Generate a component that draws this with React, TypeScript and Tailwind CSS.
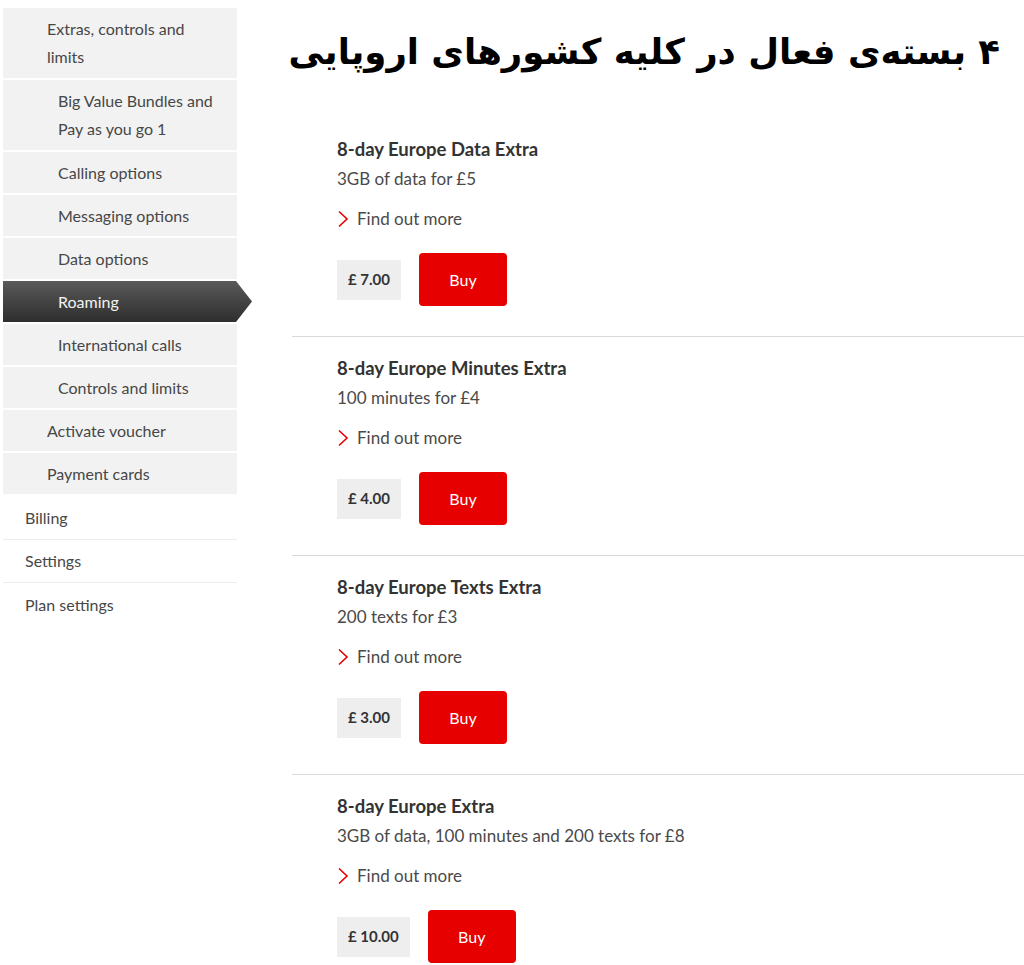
import React from "react";

type SideItem = { label: string; indent: string; lines?: number; active?: boolean };

const grayItems: SideItem[] = [
  { label: "Extras, controls and limits", indent: "pl-[44px] pr-[20px]", lines: 2 },
  { label: "Big Value Bundles and Pay as you go 1", indent: "pl-[55px] pr-[20px]", lines: 2 },
  { label: "Calling options", indent: "pl-[55px]" },
  { label: "Messaging options", indent: "pl-[55px]" },
  { label: "Data options", indent: "pl-[55px]" },
  { label: "Roaming", indent: "pl-[55px]", active: true },
  { label: "International calls", indent: "pl-[55px]" },
  { label: "Controls and limits", indent: "pl-[55px]" },
  { label: "Activate voucher", indent: "pl-[44px]" },
  { label: "Payment cards", indent: "pl-[44px]" },
];

const whiteItems = ["Billing", "Settings", "Plan settings"];

const cards = [
  { title: "8-day Europe Data Extra", sub: "3GB of data for £5", price: "£ 7.00" },
  { title: "8-day Europe Minutes Extra", sub: "100 minutes for £4", price: "£ 4.00" },
  { title: "8-day Europe Texts Extra", sub: "200 texts for £3", price: "£ 3.00" },
  { title: "8-day Europe Extra", sub: "3GB of data, 100 minutes and 200 texts for £8", price: "£ 10.00" },
];

function Chevron() {
  return (
    <svg width="12" height="18" viewBox="0 0 12 18" className="shrink-0">
      <polyline points="2,1.5 10,9 2,16.5" fill="none" stroke="#e60000" strokeWidth="1.6" />
    </svg>
  );
}

export default function App() {
  return (
    <div
      className="w-[1024px] h-[965px] bg-white overflow-hidden flex"
      style={{ fontFamily: "Lato, 'Open Sans', sans-serif" }}
    >
      {/* Sidebar */}
      <div className="w-[234px] ml-[3px] pt-[8px] shrink-0">
        <div className="flex flex-col gap-[2px]">
          {grayItems.map((it) =>
            it.active ? (
              <div
                key={it.label}
                className="w-[249px] h-[41px] flex items-center pl-[55px] text-[16px] text-[#f2f2f2] bg-gradient-to-b from-[#5a5a5a] to-[#2e2e2e] [clip-path:polygon(0_0,233px_0,249px_50%,233px_100%,0_100%)]"
              >
                {it.label}
              </div>
            ) : (
              <div
                key={it.label}
                className={`bg-[#f2f2f2] text-[#474747] text-[16px] ${it.indent} ${
                  it.lines === 2 ? "py-[7px] leading-[28px]" : "h-[41px] flex items-center"
                }`}
              >
                {it.label}
              </div>
            )
          )}
        </div>
        <div className="mt-[3px] flex flex-col">
          {whiteItems.map((l) => (
            <div
              key={l}
              className="h-[43px] flex items-center pl-[22px] text-[16px] text-[#474747] border-b border-[#ececec] last:border-b-0"
            >
              {l}
            </div>
          ))}
        </div>
      </div>

      {/* Main */}
      <div className="ml-[55px] flex-1 flex flex-col min-w-0">
        <div className="h-[118px] shrink-0 pt-[24px] pr-[24px]">
          <h1
            dir="rtl"
            className="text-right whitespace-nowrap text-[35.5px] leading-[56px] font-bold text-black"
            style={{ fontFamily: "'DejaVu Sans', sans-serif" }}
          >
            ۴ بسته‌ی فعال در کلیه کشورهای اروپایی
          </h1>
        </div>
        {cards.map((c, i) => (
          <div
            key={c.title}
            className={`shrink-0 pl-[45px] pt-[19px] pb-[30px] ${i < cards.length - 1 ? "border-b border-[#d9d9d9]" : ""}`}
          >
            <div className="text-[18.5px] leading-[24px] font-bold text-[#333333]">{c.title}</div>
            <div className="mt-[6px] text-[17px] leading-[24px] text-[#4a4a4a]">{c.sub}</div>
            <div className="mt-[16px] h-[24px] flex items-center gap-[8px] text-[17px] text-[#4a4a4a]">
              <Chevron />
              <span>Find out more</span>
            </div>
            <div className="mt-[22px] flex items-center gap-[18px]">
              <div className="h-[40px] px-[11px] flex items-center bg-[#eeeeee] text-[15px] font-bold text-[#333333]">
                {c.price}
              </div>
              <div className="w-[88px] h-[53px] rounded-[4px] bg-[#e60000] flex items-center justify-center text-[16px] text-white">
                Buy
              </div>
            </div>
          </div>
        ))}
      </div>
    </div>
  );
}
